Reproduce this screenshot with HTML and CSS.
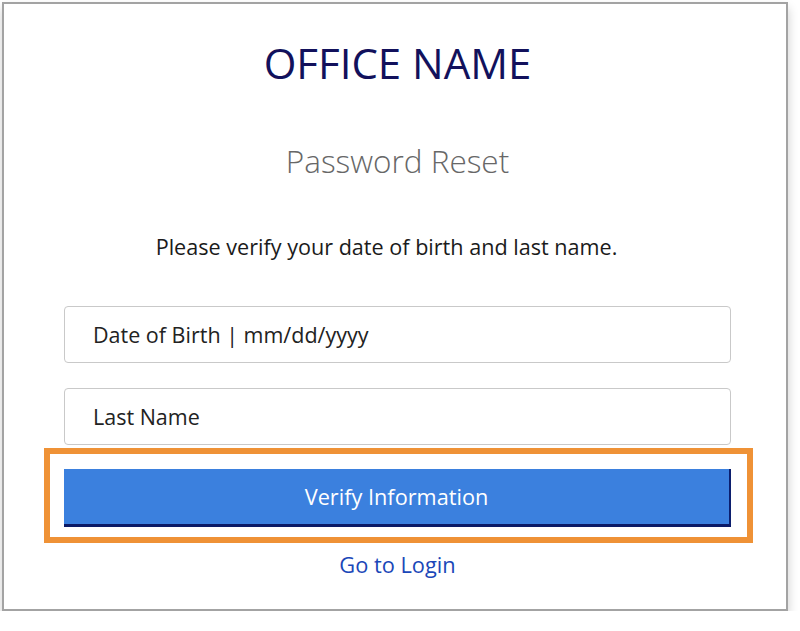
FILE: index.html
```html
<!DOCTYPE html>
<html lang="en">
<head>
<meta charset="utf-8">
<title>Password Reset</title>
<link rel="stylesheet" href="styles.css">
</head>
<body>
<div class="card">
  <div class="column">
    <h1 class="office">OFFICE NAME</h1>
    <h2 class="subtitle">Password Reset</h2>
    <p class="prompt">Please verify your date of birth and last name.</p>
    <input class="field field-dob" type="text" placeholder="Date of Birth | mm/dd/yyyy">
    <input class="field field-name" type="text" placeholder="Last Name">
    <div class="highlight">
      <button class="verify" type="button">Verify Information</button>
    </div>
    <a class="login" href="#">Go to Login</a>
  </div>
</div>
</body>
</html>
```
FILE: styles.css
```css
html, body {
  margin: 0;
  padding: 0;
  background: #ffffff;
}
body {
  font-family: "Open Sans", "Noto Sans", "DejaVu Sans", sans-serif;
  padding: 2px 0 0 2px;
}
.card {
  box-sizing: border-box;
  width: 786px;
  height: 609px;
  border: 2px solid #a3a3a3;
  background: #ffffff;
  box-shadow: 0 6px 10px rgba(0, 0, 0, 0.2);
  padding: 37px 0 0 60px;
}
.column {
  width: 667px;
  display: flex;
  flex-direction: column;
  align-items: stretch;
  text-align: center;
}
.office {
  margin: 0;
  font-size: 42px;
  line-height: 43px;
  font-weight: 400;
  color: #12115c;
}
.subtitle {
  margin: 61px 0 0;
  font-size: 31.5px;
  line-height: 32px;
  font-weight: 300;
  color: #676767;
}
.prompt {
  margin: 59px 0 0;
  font-size: 21.6px;
  line-height: 22px;
  color: #1b1b1b;
  padding-right: 22px;
}
.field {
  box-sizing: border-box;
  height: 57px;
  margin: 48px 0 0;
  padding: 0 0 1px 28px;
  border: 1px solid #c9c9c9;
  border-radius: 4px;
  font-family: inherit;
  font-size: 21.5px;
  color: #222222;
  background: #ffffff;
  outline: none;
}
.field::placeholder {
  color: #222222;
  opacity: 1;
}
.field-name {
  margin-top: 25px;
}
.highlight {
  margin: 3px -22px 0 -20px;
  border: 6px solid #ef9236;
  padding: 15px 16px 10px 14px;
}
.verify {
  display: block;
  box-sizing: border-box;
  width: 667px;
  height: 58px;
  margin: 0;
  border: none;
  border-right: 2px solid #0c1f6e;
  border-bottom: 3px solid #0b1a66;
  background: #3b80de;
  color: #ffffff;
  font-family: inherit;
  font-size: 21.7px;
  padding: 0;
}
.login {
  margin-top: 11px;
  font-size: 21.8px;
  line-height: 22px;
  color: #1b47b8;
  text-decoration: none;
}
```
